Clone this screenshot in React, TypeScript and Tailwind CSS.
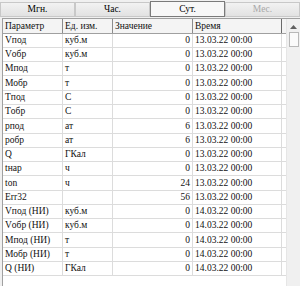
import React from "react";

type Row = { p: string; u: string; v: string; t: string; h: string };

const rows: Row[] = [
  { p: "Vпод", u: "куб.м", v: "0", t: "13.03.22 00:00", h: "h-[14px]" },
  { p: "Vобр", u: "куб.м", v: "0", t: "13.03.22 00:00", h: "h-[14px]" },
  { p: "Мпод", u: "т", v: "0", t: "13.03.22 00:00", h: "h-[14px]" },
  { p: "Мобр", u: "т", v: "0", t: "13.03.22 00:00", h: "h-[15px]" },
  { p: "Tпод", u: "C", v: "0", t: "13.03.22 00:00", h: "h-[14px]" },
  { p: "Tобр", u: "C", v: "0", t: "13.03.22 00:00", h: "h-[14px]" },
  { p: "pпод", u: "ат", v: "6", t: "13.03.22 00:00", h: "h-[15px]" },
  { p: "pобр", u: "ат", v: "6", t: "13.03.22 00:00", h: "h-[14px]" },
  { p: "Q", u: "ГКал", v: "0", t: "13.03.22 00:00", h: "h-[14px]" },
  { p: "tнар", u: "ч", v: "0", t: "13.03.22 00:00", h: "h-[14px]" },
  { p: "ton", u: "ч", v: "24", t: "13.03.22 00:00", h: "h-[15px]" },
  { p: "Err32", u: "", v: "56", t: "13.03.22 00:00", h: "h-[14px]" },
  { p: "Vпод (НИ)", u: "куб.м", v: "0", t: "14.03.22 00:00", h: "h-[14px]" },
  { p: "Vобр (НИ)", u: "куб.м", v: "0", t: "14.03.22 00:00", h: "h-[14px]" },
  { p: "Мпод (НИ)", u: "т", v: "0", t: "14.03.22 00:00", h: "h-[15px]" },
  { p: "Мобр (НИ)", u: "т", v: "0", t: "14.03.22 00:00", h: "h-[14px]" },
  { p: "Q (НИ)", u: "ГКал", v: "0", t: "14.03.22 00:00", h: "h-[14px]" },
];

function Tab({ label, active, disabled }: { label: string; active?: boolean; disabled?: boolean }) {
  if (active) {
    return (
      <div className="w-[75px] h-[16px] flex items-center justify-center border border-[#7a7a7a] bg-[#f7f7f7] text-black">
        <span className="leading-none pt-[1px]">{label}</span>
      </div>
    );
  }
  return (
    <div
      className={
        "w-[75px] h-[15px] mt-[1px] flex items-center justify-center border border-[#c8c8c8] bg-[linear-gradient(#f2f2f2,#e2e2e2)] " +
        (disabled ? "text-[#a8a8a8]" : "text-black")
      }
    >
      <span className="leading-none pt-[1px]">{label}</span>
    </div>
  );
}

export default function App() {
  return (
    <div
      className="w-[300px] h-[286px] bg-[#f0f0f0] overflow-hidden text-[9.5px] text-[#111]"
      style={{ fontFamily: '"Liberation Serif", "Times New Roman", serif' }}
    >
      <div className="flex h-[18px] pt-[1px]">
        <Tab label="Мгн." />
        <Tab label="Час." />
        <Tab label="Сут." active />
        <Tab label="Мес." disabled />
      </div>
      <div className="ml-[2px] h-[268px] border-l border-t border-[#a0a0a0] flex">
        <div className="w-[283px] bg-white flex flex-col">
          <div className="flex h-[15px] bg-[#f4f4f4] border-b border-[#a0a0a0]">
            <div className="w-[60px] border-r border-[#8c8c8c] pl-[2px] flex items-center">Параметр</div>
            <div className="w-[50px] border-r border-[#8c8c8c] pl-[2px] flex items-center">Ед. изм.</div>
            <div className="w-[80px] border-r border-[#8c8c8c] pl-[2px] flex items-center">Значение</div>
            <div className="w-[89px] border-r border-[#6a6a6a] pl-[2px] flex items-center">Время</div>
          </div>
          {rows.map((r, i) => (
            <div key={i} className={"flex border-b border-[#dcdcdc] " + r.h}>
              <div className="w-[60px] border-r border-[#dcdcdc] pl-[2px] flex items-center whitespace-nowrap">{r.p}</div>
              <div className="w-[50px] border-r border-[#dcdcdc] pl-[2px] flex items-center whitespace-nowrap">{r.u}</div>
              <div className="w-[80px] border-r border-[#dcdcdc] pr-[2px] flex items-center justify-end">{r.v}</div>
              <div className="w-[89px] border-r border-[#dcdcdc] pl-[2px] flex items-center whitespace-nowrap">{r.t}</div>
            </div>
          ))}
        </div>
        <div className="w-[14px] bg-[#f0f0f0] border-l border-[#e6e6e6] flex flex-col items-center">
          <svg width="7" height="4" viewBox="0 0 7 4" className="mt-[6px]">
            <path d="M0 4 L3.5 0 L7 4 Z" fill="#606060" />
          </svg>
          <div className="mt-[3px] w-[10px] h-[15px] bg-[#fafafa] border border-[#b8b8b8]" />
        </div>
      </div>
    </div>
  );
}
